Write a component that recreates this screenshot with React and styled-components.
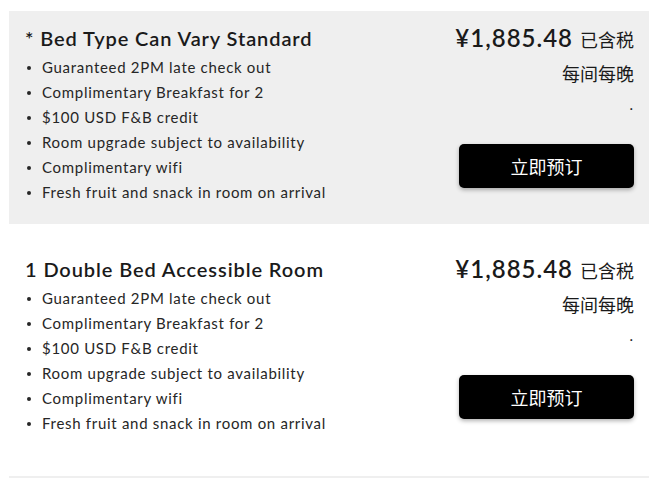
import React from "react";
import styled, { createGlobalStyle } from "styled-components";

const GlobalStyle = createGlobalStyle`
  html, body { margin: 0; padding: 0; background: #ffffff; }
  body { font-family: "Lato", "Noto Sans CJK SC", sans-serif; color: #1d1d1d; }
  * { box-sizing: border-box; }
`;

const Page = styled.div`
  padding: 11px 9px 0;
  display: flex;
  flex-direction: column;
`;

const RoomRow = styled.section`
  display: flex;
  justify-content: space-between;
  padding: ${(p) => (p.$first ? "13px 15px 19px 16px" : "31px 15px 40px 16px")};
  background: ${(p) => (p.$highlight ? "#efefef" : "#ffffff")};
  border-bottom: ${(p) => (p.$last ? "2px solid #efefef" : "none")};
`;

const Info = styled.div`
  display: flex;
  flex-direction: column;
`;

const Title = styled.h2`
  margin: 0;
  font-size: 20px;
  line-height: 28px;
  font-weight: 600;
  color: #1a1a1a;
  letter-spacing: 0.9px;
`;

const Perks = styled.ul`
  margin: 3px 0 0;
  padding: 0;
  list-style: none;
`;

const Perk = styled.li`
  display: flex;
  align-items: center;
  font-size: 15px;
  line-height: 25px;
  color: #262626;
  letter-spacing: 0.7px;
  &::before {
    content: "";
    width: 4px;
    height: 4px;
    border-radius: 50%;
    background: #262626;
    margin: 1px 11px 0 2px;
    flex: none;
  }
`;

const PriceCol = styled.div`
  display: flex;
  flex-direction: column;
  align-items: flex-end;
`;

const PriceLine = styled.div`
  display: flex;
  align-items: baseline;
  gap: 7px;
  line-height: 28px;
`;

const Amount = styled.span`
  font-size: 24px;
  font-weight: 600;
  letter-spacing: 1px;
  color: #1a1a1a;
`;

const Note = styled.span`
  font-family: "Noto Sans CJK SC", sans-serif;
  font-size: 18px;
  color: #1a1a1a;
`;

const PerNight = styled.div`
  margin-top: 8px;
  font-family: "Noto Sans CJK SC", sans-serif;
  font-size: 18px;
  line-height: 24px;
  color: #1a1a1a;
`;

const Dot = styled.div`
  margin-top: 7px;
  font-size: 15px;
  line-height: 24px;
  padding-right: 1px;
`;

const BookButton = styled.button`
  margin-top: 28px;
  width: 175px;
  height: 44px;
  border: none;
  border-radius: 5px;
  background: #000000;
  color: #ffffff;
  font-family: "Noto Sans CJK SC", sans-serif;
  font-size: 18px;
  box-shadow: 0 2px 4px rgba(0, 0, 0, 0.3);
  cursor: pointer;
`;

const perks = [
  "Guaranteed 2PM late check out",
  "Complimentary Breakfast for 2",
  "$100 USD F&B credit",
  "Room upgrade subject to availability",
  "Complimentary wifi",
  "Fresh fruit and snack in room on arrival",
];

const rooms = [
  { name: "* Bed Type Can Vary Standard", price: "¥1,885.48" },
  { name: "1 Double Bed Accessible Room", price: "¥1,885.48" },
];

export default function App() {
  return (
    <>
      <GlobalStyle />
      <Page>
        {rooms.map((r, i) => (
          <RoomRow key={i} $first={i === 0} $highlight={i === 0} $last={i === rooms.length - 1}>
            <Info>
              <Title>{r.name}</Title>
              <Perks>
                {perks.map((p) => (
                  <Perk key={p}>{p}</Perk>
                ))}
              </Perks>
            </Info>
            <PriceCol>
              <PriceLine>
                <Amount>{r.price}</Amount>
                <Note>已含税</Note>
              </PriceLine>
              <PerNight>每间每晚</PerNight>
              <Dot>.</Dot>
              <BookButton>立即预订</BookButton>
            </PriceCol>
          </RoomRow>
        ))}
      </Page>
    </>
  );
}
